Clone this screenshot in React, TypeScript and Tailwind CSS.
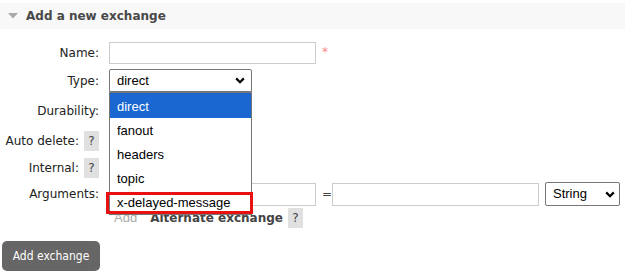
const types = ["direct", "fanout", "headers", "topic", "x-delayed-message"];

function Chevron() {
  return (
    <svg width="10" height="7" viewBox="0 0 10 7" className="shrink-0">
      <path d="M1.2 1.4 L5 5.2 L8.8 1.4" fill="none" stroke="#000" strokeWidth="2.2" />
    </svg>
  );
}

function Help() {
  return (
    <span className="ml-[5px] inline-flex h-[20px] w-[15px] items-center justify-center bg-[#e0e0e0] text-[12px] text-[#444]">
      ?
    </span>
  );
}

function Label({ children }: { children: React.ReactNode }) {
  return (
    <div className="flex w-[99px] shrink-0 items-center justify-end text-[12px] text-[#222]">{children}</div>
  );
}

export default function App() {
  return (
    <div className="relative h-[277px] w-[625px] overflow-hidden bg-white font-['DejaVu_Sans',sans-serif]">
      <div className="mt-[3px] flex h-[26px] items-center bg-[#f8f8f8] pl-[8px]">
        <svg width="10" height="6" viewBox="0 0 10 6">
          <path d="M0 0 H10 L5 5.5 Z" fill="#aaa" />
        </svg>
        <span className="ml-[8px] text-[12px] font-bold text-[#484848]">Add a new exchange</span>
      </div>

      <div className="mt-[13px] flex h-[22px]">
        <Label>Name:</Label>
        <input className="ml-[10px] h-[22px] w-[207px] border border-[#ccc] bg-white outline-none" />
        <span className="ml-[6px] mt-[1px] text-[12px] text-[#f88]">*</span>
      </div>

      <div className="mt-[5px] flex h-[23px]">
        <Label>Type:</Label>
        <div className="ml-[10px] flex h-[23px] w-[143px] items-center justify-between rounded-t-[2px] border border-[#767676] pl-[7px] pr-[6px] font-['Liberation_Sans',sans-serif] text-[13px] text-black">
          <span>direct</span>
          <Chevron />
        </div>
      </div>

      <div className="mt-[8px] flex h-[22px]">
        <Label>Durability:</Label>
      </div>

      <div className="mt-[8px] flex h-[22px]">
        <Label>
          Auto delete:
          <Help />
        </Label>
      </div>

      <div className="mt-[5px] flex h-[22px]">
        <Label>
          Internal:
          <Help />
        </Label>
      </div>

      <div className="mt-[3px] flex h-[24px] items-center">
        <Label>Arguments:</Label>
        <input className="ml-[10px] h-[23px] w-[207px] border border-[#ccc] bg-white outline-none" />
        <span className="ml-[6px] w-[10px] text-[12px] text-[#444]">=</span>
        <input className="h-[23px] w-[207px] border border-[#ccc] bg-white outline-none" />
        <div className="ml-[6px] flex h-[24px] w-[75px] items-center justify-between rounded-[2px] border border-[#767676] pl-[7px] pr-[4px] font-['Liberation_Sans',sans-serif] text-[13px] text-black">
          <span>String</span>
          <Chevron />
        </div>
      </div>

      <div className="mt-[2px] flex h-[20px] items-center pl-[114px]">
        <span className="font-['Liberation_Sans',sans-serif] text-[13px] text-[#aaa]">Add</span>
        <span className="ml-[13px] text-[12px] font-bold text-[#444]">Alternate exchange</span>
        <Help />
      </div>

      <button className="ml-[2px] mt-[13px] flex h-[30px] w-[98px] items-center justify-center rounded-[5px] bg-[#666] font-['DejaVu_Sans_Condensed','DejaVu_Sans',sans-serif] text-[12px] text-white">
        Add exchange
      </button>

      <div className="absolute left-[109px] top-[92px] w-[143px] border border-[#767676] bg-white font-['Liberation_Sans',sans-serif] text-[13px] text-black">
        {types.map((t, i) => (
          <div
            key={t}
            className={
              i === 0
                ? "flex h-[25px] items-center bg-[#1a67d2] pl-[7px] pt-[2px] text-white"
                : "flex h-[24px] items-center pl-[7px] pt-[2px]"
            }
          >
            {t}
          </div>
        ))}
      </div>

      <div className="absolute left-[106px] top-[192px] h-[22px] w-[147px] border-[3px] border-[#e81010]" />
    </div>
  );
}
